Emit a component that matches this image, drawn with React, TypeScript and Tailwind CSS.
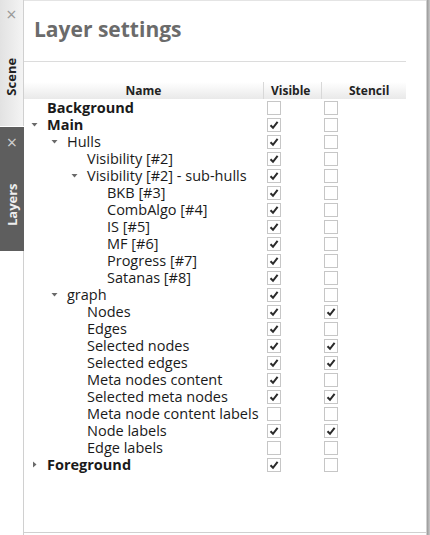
import { useState } from "react";

type Row = { label: string; level: number; bold?: boolean; arrow?: "down" | "right"; visible: boolean; stencil: boolean };

const rows: Row[] = [
  { label: "Background", level: 0, bold: true, visible: false, stencil: false },
  { label: "Main", level: 0, bold: true, arrow: "down", visible: true, stencil: false },
  { label: "Hulls", level: 1, arrow: "down", visible: true, stencil: false },
  { label: "Visibility [#2]", level: 2, visible: true, stencil: false },
  { label: "Visibility [#2] -  sub-hulls", level: 2, arrow: "down", visible: true, stencil: false },
  { label: "BKB [#3]", level: 3, visible: true, stencil: false },
  { label: "CombAlgo [#4]", level: 3, visible: true, stencil: false },
  { label: "IS [#5]", level: 3, visible: true, stencil: false },
  { label: "MF [#6]", level: 3, visible: true, stencil: false },
  { label: "Progress [#7]", level: 3, visible: true, stencil: false },
  { label: "Satanas [#8]", level: 3, visible: true, stencil: false },
  { label: "graph", level: 1, arrow: "down", visible: true, stencil: false },
  { label: "Nodes", level: 2, visible: true, stencil: true },
  { label: "Edges", level: 2, visible: true, stencil: false },
  { label: "Selected nodes", level: 2, visible: true, stencil: true },
  { label: "Selected edges", level: 2, visible: true, stencil: true },
  { label: "Meta nodes content", level: 2, visible: true, stencil: false },
  { label: "Selected meta nodes", level: 2, visible: true, stencil: true },
  { label: "Meta node content labels", level: 2, visible: false, stencil: false },
  { label: "Node labels", level: 2, visible: true, stencil: true },
  { label: "Edge labels", level: 2, visible: false, stencil: false },
  { label: "Foreground", level: 0, bold: true, arrow: "right", visible: true, stencil: false },
];

// 20px per tree level
const indent = ["pl-[7px]", "pl-[27px]", "pl-[47px]", "pl-[67px]"];

const Check = ({ on, onClick }: { on: boolean; onClick: () => void }) => (
  <div onClick={onClick} className="w-[14px] h-[14px] border border-[#c6c6c6] bg-white flex items-center justify-center">
    {on && (
      <svg width="10" height="10" viewBox="0 0 10 10">
        <path d="M1.5 5.2 L4 7.8 L8.6 1.8" fill="none" stroke="#2b2b2b" strokeWidth="2" />
      </svg>
    )}
  </div>
);

const Arrow = ({ dir }: { dir: "down" | "right" }) => (
  <svg width="7" height="7" viewBox="0 0 7 7" className="shrink-0">
    {dir === "down" ? <path d="M0.5 2 L6.5 2 L3.5 5.5 Z" fill="#6a6a6a" /> : <path d="M2 0.5 L5.5 3.5 L2 6.5 Z" fill="#6a6a6a" />}
  </svg>
);

const App = () => {
  const [data, setData] = useState(rows);

  const toggle = (i: number, key: "visible" | "stencil") =>
    setData(data.map((r, j) => (j === i ? { ...r, [key]: !r[key] } : r)));

  return (
    <div className="flex w-[430px] h-[535px] bg-white" style={{ fontFamily: "'Open Sans', 'DejaVu Sans', sans-serif" }}>
      {/* side tabs */}
      <div className="w-[24px] flex flex-col shrink-0">
        <div className="h-[126px] bg-gradient-to-r from-[#e2e2e2] to-[#f4f4f4] flex flex-col items-center border-r border-[#d0d0d0]">
          <span className="text-[#9a9a9a] text-[18px] leading-none mt-[5px]">×</span>
          <span className="mt-[30px] -rotate-90 text-[13px] font-bold text-[#222] whitespace-nowrap translate-y-[14px]">Scene</span>
        </div>
        <div className="h-[124px] bg-[#5e5e5e] flex flex-col items-center mt-[1px]">
          <span className="text-[#cfcfcf] text-[18px] leading-none mt-[6px]">×</span>
          <span className="mt-[30px] -rotate-90 text-[13px] font-bold text-[#eeeeee] whitespace-nowrap translate-y-[14px]">Layers</span>
        </div>
        <div className="flex-1 border-r border-[#d0d0d0]" />
      </div>

      {/* panel */}
      <div className="flex-1 flex flex-col border-b border-[#d0d0d0] border-t border-t-[#e4e4e4] h-[533px] pr-[20px]">
        <h1 className="text-[21px] font-bold text-[#6b6b6b] leading-[26px] pl-[10px] mt-[15px]">Layer settings</h1>
        <div className="h-px bg-[#dcdcdc] mt-[19px]" />

        <div className="mt-[20px] grid grid-cols-[239px_58px_1fr] h-[17px] bg-gradient-to-b from-white to-[#e9e9e9] text-[12px] font-bold text-[#222] leading-[17px]">
          <div className="text-center">Name</div>
          <div className="border-l border-[#d8d8d8] pl-[7px]">Visible</div>
          <div className="border-l border-[#d8d8d8] pl-[27px]">Stencil</div>
        </div>

        <div className="flex flex-col">
          {data.map((r, i) => (
            <div key={i} className="grid grid-cols-[239px_58px_1fr] h-[17px] items-center">
              <div className={`flex items-center text-[14.5px] leading-[17px] text-[#1a1a1a] whitespace-nowrap ${indent[r.level]} ${r.bold ? "font-bold" : ""}`}>
                <span className="w-[16px] shrink-0 flex items-center">{r.arrow && <Arrow dir={r.arrow} />}</span>
                <span>{r.label}</span>
              </div>
              <div className="pl-[4px]">
                <Check on={r.visible} onClick={() => toggle(i, "visible")} />
              </div>
              <div className="pl-[3px]">
                <Check on={r.stencil} onClick={() => toggle(i, "stencil")} />
              </div>
            </div>
          ))}
        </div>
      </div>

      {/* right edge */}
      <div className="w-[4px] bg-gradient-to-r from-[#9a9a9a] to-[#c8c8c8] border-l border-[#d0d0d0]" />
    </div>
  );
};

export default App;
